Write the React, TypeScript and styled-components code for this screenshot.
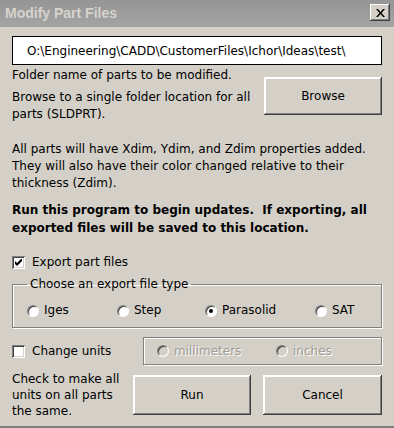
import * as React from 'react';
import styled, { createGlobalStyle } from 'styled-components';

const GlobalStyle = createGlobalStyle`
  html, body {
    margin: 0;
    padding: 0;
    background: #d4d0c8;
  }
  * {
    box-sizing: border-box;
  }
`;

const FONT = `'DejaVu Sans', 'Liberation Sans', sans-serif`;

export default function App() {
  const [exportFiles, setExportFiles] = React.useState<boolean>(true);
  const [changeUnits, setChangeUnits] = React.useState<boolean>(false);
  const [fileType, setFileType] = React.useState<string>('Parasolid');
  const types = ['Iges', 'Step', 'Parasolid', 'SAT'];

  return (
    <>
      <GlobalStyle />
      <Window>
        <TitleBar>
          <Title>Modify Part Files</Title>
          <CloseButton>
            <svg width="9" height="8" viewBox="0 0 9 8">
              <path d="M0 0h2l2.5 3 2.5-3h2l-3.5 4 3.5 4h-2l-2.5-3-2.5 3h-2l3.5-4z" fill="#000" />
            </svg>
          </CloseButton>
        </TitleBar>
        <Body>
          <PathBox>O:\Engineering\CADD\CustomerFiles\Ichor\Ideas\test\</PathBox>
          <BrowseRow>
            <TextColumn>
              <Text>Folder name of parts to be modified.</Text>
              <Text $top={5}>
                Browse to a single folder location for all
                <br />
                parts (SLDPRT).
              </Text>
            </TextColumn>
            <Button $width={118} $height={38} $top={10}>Browse</Button>
          </BrowseRow>
          <Text $top={18}>
            All parts will have Xdim, Ydim, and Zdim properties added.
            <br />
            They will also have their color changed relative to their
            <br />
            thickness (Zdim).
          </Text>
          <BoldText>
            Run this program to begin updates.&nbsp; If exporting, all
            <br />
            exported files will be saved to this location.
          </BoldText>
          <CheckRow $top={17} onClick={() => setExportFiles(!exportFiles)}>
            <CheckBox>{exportFiles && <CheckMark />}</CheckBox>
            <Label>Export part files</Label>
          </CheckRow>
          <GroupBox>
            <Legend>Choose an export file type</Legend>
            <RadioRow>
              {types.map(t => (
                <RadioItem key={t} onClick={() => setFileType(t)}>
                  <Radio $checked={fileType === t} />
                  <Label>{t}</Label>
                </RadioItem>
              ))}
            </RadioRow>
          </GroupBox>
          <BottomGrid>
            <UnitsCheckRow $top={0} onClick={() => setChangeUnits(!changeUnits)}>
              <CheckBox>{changeUnits && <CheckMark />}</CheckBox>
              <Label>Change units</Label>
            </UnitsCheckRow>
            <UnitsFrame>
              <RadioItem>
                <Radio $disabled />
                <Label $disabled>millimeters</Label>
              </RadioItem>
              <RadioItem>
                <Radio $disabled />
                <Label $disabled>inches</Label>
              </RadioItem>
            </UnitsFrame>
            <NoteText>
              Check to make all
              <br />
              units on all parts
              <br />
              the same.
            </NoteText>
            <ButtonRow>
              <Button $width={118} $height={40} $top={10}>Run</Button>
              <Button $width={119} $height={40} $top={10}>Cancel</Button>
            </ButtonRow>
          </BottomGrid>
        </Body>
      </Window>
    </>
  );
}

function CheckMark() {
  return (
    <svg width="7" height="7" viewBox="0 0 7 7">
      <path d="M0 2v3l2 2 5-5V-1L2 4z" fill="#000" />
    </svg>
  );
}

const Window = styled.div`
  width: 394px;
  height: 428px;
  display: flex;
  flex-direction: column;
  background: #d4d0c8;
  border-bottom: 2px solid #7f7f7f;
  font-family: ${FONT};
  font-size: 12px;
  color: #000;
`;

const TitleBar = styled.div`
  height: 27px;
  display: flex;
  align-items: center;
  justify-content: space-between;
  padding: 0 4px 2px 5px;
  background: linear-gradient(to bottom, #959595, #a4a4a4);
`;

const Title = styled.div`
  font-family: 'Liberation Sans', Arial, sans-serif;
  font-weight: bold;
  font-size: 14px;
  color: #d6d3cd;
`;

const CloseButton = styled.div`
  width: 20px;
  height: 17px;
  display: flex;
  align-items: center;
  justify-content: center;
  background: #d4d0c8;
  box-shadow: inset -1px -1px #404040, inset 1px 1px #fff, inset -2px -2px #808080;
`;

const Body = styled.div`
  display: flex;
  flex-direction: column;
  padding: 9px 12px 0 12px;
`;

const PathBox = styled.div`
  height: 29px;
  border: 1px solid #000;
  background: #fff;
  padding-left: 14px;
  display: flex;
  align-items: center;
  font-size: 12px;
  white-space: nowrap;
  overflow: hidden;
`;

const BrowseRow = styled.div`
  display: flex;
  justify-content: space-between;
  align-items: flex-start;
  margin-top: 2px;
`;

const TextColumn = styled.div`
  display: flex;
  flex-direction: column;
`;

const Text = styled.div<{ $top?: number }>`
  margin-top: ${p => p.$top ?? 0}px;
  line-height: 17px;
  white-space: nowrap;
`;

const NoteText = styled.div`
  margin-top: 6px;
  line-height: 16px;
  white-space: nowrap;
`;

const BoldText = styled.div`
  margin-top: 9px;
  font-weight: bold;
  line-height: 18px;
  white-space: nowrap;
`;

const Button = styled.div<{ $width: number; $height: number; $top: number }>`
  width: ${p => p.$width}px;
  height: ${p => p.$height}px;
  margin-top: ${p => p.$top}px;
  display: flex;
  align-items: center;
  justify-content: center;
  background: #d4d0c8;
  box-shadow: inset -1px -1px #404040, inset 1px 1px #fff, inset -2px -2px #808080, inset 2px 2px #fff;
  cursor: pointer;
`;

const CheckRow = styled.div<{ $top: number }>`
  display: flex;
  align-items: center;
  align-self: flex-start;
  gap: 7px;
  margin-top: ${p => p.$top}px;
  height: 16px;
  cursor: pointer;
`;

const UnitsCheckRow = styled(CheckRow)`
  align-self: center;
`;

const CheckBox = styled.div`
  width: 13px;
  height: 13px;
  display: flex;
  align-items: center;
  justify-content: center;
  background: #fff;
  box-shadow: inset 1px 1px #808080, inset -1px -1px #fff, inset 2px 2px #404040, inset -2px -2px #d4d0c8;
`;

const Label = styled.span<{ $disabled?: boolean }>`
  color: ${p => (p.$disabled ? '#a09c94' : '#000')};
  text-shadow: ${p => (p.$disabled ? '1px 1px #fff' : 'none')};
  white-space: nowrap;
`;

const GroupBox = styled.fieldset`
  margin: 6px 0 0 0;
  padding: 9px 14px 8px 14px;
  border: 1px solid #808080;
  box-shadow: 1px 1px #fff, inset 1px 1px #fff;
`;

const Legend = styled.legend`
  padding: 0 3px;
  margin-left: 0;
  font-size: 12px;
  line-height: 17px;
`;

const RadioRow = styled.div`
  display: grid;
  grid-template-columns: 90px 88px 110px 1fr;
  line-height: 17px;
`;

const RadioItem = styled.div`
  display: flex;
  align-items: center;
  gap: 5px;
  cursor: pointer;
`;

const Radio = styled.div<{ $checked?: boolean; $disabled?: boolean }>`
  width: 12px;
  height: 12px;
  border-radius: 50%;
  background: ${p => (p.$disabled ? '#d4d0c8' : '#fff')};
  border: 1px solid;
  border-color: #808080 #fff #fff #808080;
  box-shadow: inset 1px 1px #404040;
  position: relative;
  &::after {
    content: '';
    display: ${p => (p.$checked ? 'block' : 'none')};
    position: absolute;
    left: 3px;
    top: 3px;
    width: 4px;
    height: 4px;
    border-radius: 50%;
    background: #000;
  }
`;

const BottomGrid = styled.div`
  display: grid;
  grid-template-columns: 121px 1fr;
  align-items: start;
  margin-top: 9px;
`;

const UnitsFrame = styled.div`
  margin-left: 10px;
  height: 28px;
  display: grid;
  grid-template-columns: 119px 1fr;
  align-items: center;
  padding-left: 13px;
  border: 1px solid #808080;
  box-shadow: 1px 1px #fff, inset 1px 1px #fff;
`;

const ButtonRow = styled.div`
  display: flex;
  gap: 12px;
`;
